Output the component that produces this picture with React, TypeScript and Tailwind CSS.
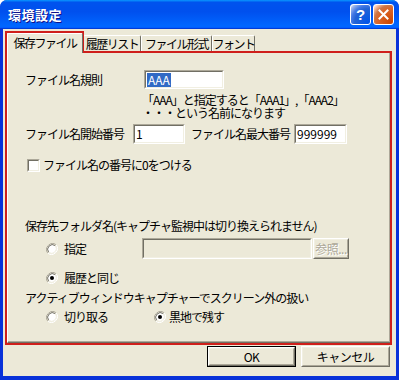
import type { ReactNode } from 'react'

const font = "font-['Noto_Sans_CJK_JP','Noto_Sans',sans-serif]"

// classic sunken edit box
function Edit({ className = '', disabled = false, children }: { className?: string; disabled?: boolean; children?: ReactNode }) {
  return (
    <div className={`border border-t-[#aca899] border-l-[#aca899] border-r-white border-b-white ${className}`}>
      <div
        className={`h-full border border-t-[#716f64] border-l-[#716f64] border-r-[#f1efe2] border-b-[#f1efe2] flex items-center pl-[1px] text-[12px] leading-[14px] ${
          disabled ? 'bg-[#ece9d8]' : 'bg-white'
        }`}
      >
        {children}
      </div>
    </div>
  )
}

function Button({ className = '', disabled = false, isDefault = false, children }: { className?: string; disabled?: boolean; isDefault?: boolean; children: ReactNode }) {
  return (
    <div className={`${isDefault ? 'border border-black' : ''} ${className}`}>
      <div className="h-full border border-t-white border-l-white border-r-[#716f64] border-b-[#716f64]">
        <div className="h-full border border-t-[#f1efe2] border-l-[#f1efe2] border-r-[#aca899] border-b-[#aca899] flex items-center justify-center text-[12px] tracking-[-0.5px] whitespace-nowrap">
          {disabled ? <span className="text-[#aca899] [text-shadow:1px_1px_#fff]">{children}</span> : children}
        </div>
      </div>
    </div>
  )
}

function Radio({ checked = false }: { checked?: boolean }) {
  return (
    <svg width="12" height="12" viewBox="0 0 12 12" className="shrink-0">
      <path d="M10.2 1.8 A6 6 0 0 0 1.8 10.2" fill="none" stroke="#aca899" strokeWidth="1" />
      <path d="M1.8 10.2 A6 6 0 0 0 10.2 1.8" fill="none" stroke="#ffffff" strokeWidth="1" />
      <circle cx="6" cy="6" r="4.6" fill="#fff" />
      <path d="M9.3 2.7 A4.7 4.7 0 0 0 2.7 9.3" fill="none" stroke="#716f64" strokeWidth="1" />
      <path d="M2.7 9.3 A4.7 4.7 0 0 0 9.3 2.7" fill="none" stroke="#f1efe2" strokeWidth="1" />
      {checked && <circle cx="6" cy="6" r="2" fill="#000" />}
    </svg>
  )
}

function Tab({ label, selected = false, className = '' }: { label: string; selected?: boolean; className?: string }) {
  return (
    <div
      className={`flex items-center justify-center whitespace-nowrap rounded-t-[2px] border-t border-l border-t-white border-l-white border-r border-r-[#716f64] bg-[#ece9d8] text-[12px] tracking-[-1.5px] ${
        selected ? 'h-[20px] -mb-[1px] z-10 pb-[2px]' : 'h-[17px] pb-[1px]'
      } ${className}`}
    >
      {label}
    </div>
  )
}

export default function App() {
  return (
    <div className={`relative w-[399px] h-[380px] rounded-t-[7px] bg-[#0831d9] flex flex-col ${font} text-black`}>
      {/* title bar */}
      <div className="h-[29px] shrink-0 rounded-t-[7px] bg-[linear-gradient(180deg,#0997ff,#0053ee_8%,#0050ee_40%,#0066ff_88%,#0066ff_93%,#005bff_95%,#003dd7_96%,#003dd7)] flex items-center pl-[8px] pr-[5px]">
        <span className="text-white font-bold text-[13px] tracking-[0.5px] [text-shadow:1px_1px_#0f1089]">環境設定</span>
        <div className="ml-auto flex gap-[2px]">
          <div className="w-[21px] h-[21px] rounded-[3px] border border-white bg-[radial-gradient(circle_at_90%_90%,#0054e9_0%,#2263d5_55%,#4479e4_70%,#a3bbec_90%,#fff_100%)] flex items-center justify-center">
            <span className="text-white font-bold text-[15px] leading-none font-['Liberation_Sans',sans-serif]">?</span>
          </div>
          <div className="w-[21px] h-[21px] rounded-[3px] border border-white bg-[radial-gradient(circle_at_90%_90%,#cc4600_0%,#dc6527_55%,#cd7546_70%,#ffccb2_90%,#fff_100%)] flex items-center justify-center">
            <svg width="11" height="11" viewBox="0 0 11 11">
              <path d="M1.5 1.5 L9.5 9.5 M9.5 1.5 L1.5 9.5" stroke="#fff" strokeWidth="2" strokeLinecap="square" />
            </svg>
          </div>
        </div>
      </div>

      {/* client area */}
      <div className="flex-1 mx-[3px] mb-[4px] bg-[#ece9d8] flex flex-col pl-[4px]">
        <div className="flex items-end h-[23px]">
          <Tab label="保存ファイル" selected className="w-[76px]" />
          <Tab label="履歴リスト" className="w-[58px]" />
          <Tab label="ファイル形式" className="w-[71px]" />
          <Tab label="フォント" className="w-[43px]" />
        </div>

        {/* panel */}
        <div className="w-[384px] h-[291px] border-t border-l border-t-white border-l-white border-r border-b border-r-[#716f64] border-b-[#716f64] text-[12px] leading-[14px] tracking-[-1px]">
          <div className="h-full border-r border-b border-r-[#aca899] border-b-[#aca899] flex flex-col pl-[17px] pt-[17px]">
            <div className="flex items-center h-[19px]">
              <span className="w-[119px]">ファイル名規則</span>
              <Edit className="w-[80px] h-[19px]">
                <span className="bg-[#316ac5] text-white tracking-[0px] px-[1px]">AAA</span>
              </Edit>
            </div>

            <p className="mt-[4px] ml-[117px] whitespace-nowrap leading-[13px] h-[26px]">
              「AAA」と指定すると「AAA1」,「AAA2」
              <br />
              ・・・という名前になります
            </p>

            <div className="mt-[5px] flex items-center h-[20px]">
              <span className="w-[108px]">ファイル名開始番号</span>
              <Edit className="w-[52px] h-[20px]">1</Edit>
              <span className="ml-[6px] w-[103px]">ファイル名最大番号</span>
              <Edit className="w-[53px] h-[20px]">
                <span className="tracking-[0px]">999999</span>
              </Edit>
            </div>

            <div className="mt-[14px] flex items-center h-[14px]">
              <div className="ml-[2px] w-[13px] h-[13px] border border-t-[#aca899] border-l-[#aca899] border-r-white border-b-white">
                <div className="h-full bg-white border border-t-[#716f64] border-l-[#716f64] border-r-[#f1efe2] border-b-[#f1efe2]" />
              </div>
              <span className="ml-[3px]">ファイル名の番号に0をつける</span>
            </div>

            <div className="mt-[47px] h-[14px]">保存先フォルダ名(キャプチャ監視中は切り換えられません)</div>

            <div className="mt-[5px] flex items-center h-[21px]">
              <div className="ml-[21px] flex items-center w-[96px]">
                <Radio />
                <span className="ml-[6px]">指定</span>
              </div>
              <Edit disabled className="w-[170px] h-[21px]" />
              <Button disabled className="ml-[1px] w-[36px] h-[21px]">
                参照...
              </Button>
            </div>

            <div className="mt-[12px] flex items-center h-[14px] ml-[21px]">
              <Radio checked />
              <span className="ml-[6px]">履歴と同じ</span>
            </div>

            <div className="mt-[6px] h-[14px]">アクティブウィンドウキャプチャーでスクリーン外の扱い</div>

            <div className="mt-[5px] flex items-center h-[14px] ml-[21px]">
              <div className="flex items-center w-[108px]">
                <Radio />
                <span className="ml-[6px]">切り取る</span>
              </div>
              <Radio checked />
              <span className="ml-[3px]">黒地で残す</span>
            </div>
          </div>
        </div>

        <div className="mt-[3px] flex gap-[5px] pl-[200px]">
          <Button isDefault className="w-[89px] h-[21px]">
            <span className="font-normal">OK</span>
          </Button>
          <Button className="w-[89px] h-[21px]">キャンセル</Button>
        </div>
      </div>

      {/* red annotation outline */}
      <div className="absolute left-[5px] top-[31px] w-[79px] h-[22px] border-l-2 border-t-2 border-r-2 border-[#cf1f1b]" />
      <div className="absolute left-[5px] top-[51px] w-[387px] h-[294px] border-l-2 border-r-2 border-b-2 border-[#cf1f1b]" />
      <div className="absolute left-[82px] top-[51px] w-[310px] h-[2px] bg-[#cf1f1b]" />
    </div>
  )
}
